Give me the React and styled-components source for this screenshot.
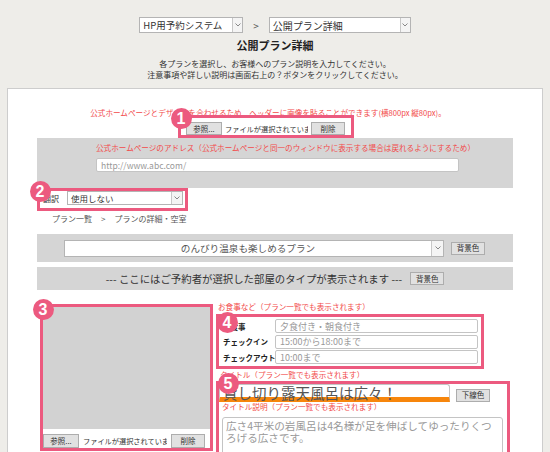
import React from 'react'
import styled, { createGlobalStyle } from 'styled-components'

const PINK = '#ec5a7f'
const RED = '#f24a4a'
const BAND = '#d5d5d5'

const GlobalStyle = createGlobalStyle`
  html, body {
    margin: 0;
    padding: 0;
    overflow: hidden;
  }
  body {
    background: #eeede9;
    font-family: "Noto Sans CJK JP", "Noto Sans", sans-serif;
    color: #333;
  }
`

const Page = styled.div`
  padding-top: 17px;
  height: 452px;
`

const Nav = styled.nav`
  display: flex;
  justify-content: center;
  align-items: center;
  gap: 10px;
  height: 16px;
  font-size: 10px;
  color: #555;
`

const SelectBox = styled.div`
  display: flex;
  width: ${(p) => p.$width}px;
  height: ${(p) => p.$height}px;
  box-sizing: border-box;
  border: 1px solid #b4b4b4;
  background: #fff;
  font-size: ${(p) => p.$size || 9.5}px;
  color: ${(p) => p.$color || '#333'};
`

const SelectText = styled.span`
  flex: 1;
  display: flex;
  align-items: center;
  justify-content: ${(p) => (p.$center ? 'center' : 'flex-start')};
  padding-left: ${(p) => (p.$center ? 0 : 3)}px;
  white-space: nowrap;
  overflow: hidden;
`

const SelectArrow = styled.span`
  width: ${(p) => p.$w || 9}px;
  display: flex;
  align-items: center;
  justify-content: center;
  border-left: 1px solid #c8c8c8;
  background: #f4f4f4;
`

const Intro = styled.header`
  text-align: center;
  margin-top: 6px;
`

const Title = styled.h1`
  margin: 0 0 6px;
  font-size: 11px;
  line-height: 13px;
  font-weight: 700;
  color: #222;
`

const Lead = styled.p`
  margin: 0;
  font-size: 8px;
  line-height: 11px;
  color: #333;
`

const Panel = styled.main`
  margin: 8px 7px 0;
  background: #fff;
  border: 1px solid #cdcdcd;
  padding: 19px 29px 20px;
`

const Note = styled.p`
  margin: ${(p) => p.$margin || '0'};
  padding: ${(p) => p.$pad || '0'};
  font-size: 7.6px;
  line-height: 10px;
  color: ${RED};
  white-space: nowrap;
  text-align: ${(p) => p.$align || 'left'};
`

const Callout = styled.div`
  position: relative;
  box-sizing: border-box;
  border: 3px solid ${PINK};
  width: ${(p) => p.$width}px;
  height: ${(p) => (p.$height ? `${p.$height}px` : 'auto')};
  margin: ${(p) => p.$margin || '0'};
  padding: ${(p) => p.$pad || '0'};
`

const Badge = styled.span`
  position: absolute;
  left: ${(p) => (p.$x === undefined ? -10.5 : p.$x)}px;
  top: ${(p) => (p.$y === undefined ? -10.5 : p.$y)}px;
  width: 21px;
  height: 21px;
  border-radius: 50%;
  background: ${PINK};
  color: #fff;
  font-family: "Liberation Sans", Arial, sans-serif;
  font-weight: 700;
  font-size: 16px;
  line-height: 21px;
  text-align: center;
  z-index: 2;
`

const FileRow = styled.div`
  display: flex;
  align-items: center;
  gap: ${(p) => p.$gap || 4}px;
  margin-top: ${(p) => p.$top || 0}px;
`

const Button = styled.button`
  width: ${(p) => p.$width}px;
  height: ${(p) => p.$height || 13}px;
  margin-left: ${(p) => p.$left || 0}px;
  padding: 0;
  border: 1px solid #adadad;
  background: #e1e1e1;
  font-family: inherit;
  font-size: 7.5px;
  color: #333;
  line-height: 1;
  flex-shrink: 0;
`

const FileName = styled.span`
  width: ${(p) => p.$width}px;
  font-size: 7.2px;
  color: #333;
  white-space: nowrap;
  overflow: hidden;
`

const Band = styled.section`
  background: ${BAND};
  height: ${(p) => p.$height}px;
  margin-top: ${(p) => p.$top || 0}px;
  display: flex;
  flex-direction: ${(p) => (p.$column ? 'column' : 'row')};
  align-items: ${(p) => (p.$column ? 'flex-start' : 'center')};
  justify-content: ${(p) => p.$justify || 'flex-start'};
  gap: ${(p) => p.$gap || 0}px;
  padding: ${(p) => p.$pad || '0'};
  box-sizing: border-box;
`

const TextInput = styled.div`
  box-sizing: border-box;
  width: ${(p) => p.$width}px;
  height: ${(p) => p.$height || 14}px;
  border: 1px solid #c4c4c4;
  border-radius: 2px;
  background: #fff;
  font-size: ${(p) => p.$size || 9}px;
  color: #999;
  padding-left: 4px;
  display: flex;
  align-items: center;
  white-space: nowrap;
`

const TranslateLabel = styled.span`
  font-size: 8px;
  color: #333;
  margin-right: 4px;
`

const Crumbs = styled.div`
  margin: 3px 0 0 15px;
  font-size: 8px;
  line-height: 10px;
  color: #555;
  display: flex;
  gap: 9px;
`

const RoomType = styled.span`
  font-size: 10.4px;
  color: #333;
  white-space: nowrap;
`

const Bottom = styled.div`
  display: flex;
  align-items: flex-start;
  margin-top: 14px;
  margin-left: 3px;
`

const Photo = styled.div`
  height: 122px;
  background: #d2d2d2;
`

const Side = styled.div`
  margin-left: 3px;
  display: flex;
  flex-direction: column;
`

const InfoRow = styled.div`
  display: flex;
  align-items: center;
  margin-bottom: 1.5px;
`

const InfoLabel = styled.span`
  width: 52px;
  font-size: 7.5px;
  font-weight: 700;
  color: #222;
  white-space: nowrap;
`

const TitleLine = styled.div`
  display: flex;
  align-items: flex-end;
`

const TitleInput = styled.div`
  box-sizing: border-box;
  width: 231px;
  height: 18px;
  border: 1px solid #c4c4c4;
  border-bottom: 5px solid #f7860c;
  border-radius: 3px 3px 0 0;
  background: #fff;
  font-size: 14.5px;
  line-height: 16px;
  color: #555;
  padding-left: 3px;
  white-space: nowrap;
`

const TextArea = styled.div`
  box-sizing: border-box;
  width: 281px;
  height: 46px;
  margin: 5px 0 0 3px;
  border: 1px solid #c4c4c4;
  border-radius: 3px;
  font-size: 10.6px;
  line-height: 12px;
  color: #999;
  padding: 2px 3px;
`

const Chevron = () => (
  <svg width="6" height="4" viewBox="0 0 6 4">
    <path d="M0.5 0.5 L3 3 L5.5 0.5" fill="none" stroke="#888" strokeWidth="1" />
  </svg>
)

const Select = ({ width, height, size, color, center, arrow, children }) => (
  <SelectBox $width={width} $height={height} $size={size} $color={color}>
    <SelectText $center={center}>{children}</SelectText>
    <SelectArrow $w={arrow}>
      <Chevron />
    </SelectArrow>
  </SelectBox>
)

// file input as the browser draws it: button, clipped file name, delete button
const FileInput = ({ nameWidth, gap, height }) => (
  <FileRow $gap={gap}>
    <Button $width={36} $height={height}>参照...</Button>
    <FileName $width={nameWidth}>ファイルが選択されていません</FileName>
    <Button $width={34} $height={height}>削除</Button>
  </FileRow>
)

const App = () => {
  return (
    <Page>
      <GlobalStyle />
      <Nav>
        <Select width={104} height={16}>HP用予約システム</Select>
        <span>&gt;</span>
        <Select width={142} height={16} size={10}>公開プラン詳細</Select>
      </Nav>

      <Intro>
        <Title>公開プラン詳細</Title>
        <Lead>各プランを選択し、お客様へのプラン説明を入力してください。</Lead>
        <Lead>注意事項や詳しい説明は画面右上の？ボタンをクリックしてください。</Lead>
      </Intro>

      <Panel>
        <Note $align="center" $pad="0 14px 0 0">
          公式ホームページとデザインを合わせるため、ヘッダーに画像を貼ることができます(横800px 縦80px)。
        </Note>
        <Callout $width={176} $height={23} $margin="-3px 0 0 141px" $pad="4px 0 0 5px">
          <Badge>1</Badge>
          <FileInput nameWidth={83} gap={3} />
        </Callout>

        <Band $height={50} $column $pad="5px 0 0 59px" $gap={5}>
          <Note>
            公式ホームページのアドレス（公式ホームページと同一のウィンドウに表示する場合は戻れるようにするため）
          </Note>
          <TextInput $width={363} $size={8.5}>http://www.abc.com/</TextInput>
        </Band>

        <Callout $width={151} $height={23} $pad="0 0 0 3px">
          <Badge $y={-10}>2</Badge>
          <FileRow $gap={0}>
            <TranslateLabel>翻訳</TranslateLabel>
            <Select width={116} height={14} size={8.5} arrow={10}>
              使用しない
            </Select>
          </FileRow>
        </Callout>

        <Crumbs>
          <span>プラン一覧</span>
          <span>&gt;</span>
          <span>プランの詳細・空室</span>
        </Crumbs>

        <Band $height={28} $top={10} $pad="0 0 0 27px" $gap={7}>
          <Select width={380} height={17} size={9.6} color="#555" center arrow={11}>
            のんびり温泉も楽しめるプラン
          </Select>
          <Button $width={34} $height={13}>背景色</Button>
        </Band>

        <Band $height={23} $top={5} $justify="center" $gap={8}>
          <RoomType>--- ここにはご予約者が選択した部屋のタイプが表示されます ---</RoomType>
          <Button $width={34} $height={13}>背景色</Button>
        </Band>

        <Bottom>
          <Callout $width={173} $height={147}>
            <Badge $y={-8.5}>3</Badge>
            <Photo />
            <FileRow $top={5}>
              <FileInput nameWidth={84} gap={4} height={14} />
            </FileRow>
          </Callout>

          <Side>
            <Note $margin="-2px 0 0 0" $pad="0 0 0 2px">お食事など（プラン一覧でも表示されます）</Note>
            <Callout $width={268} $margin="2px 0 0 0" $pad="2px 3px 0 4px">
              <Badge $x={-2.5} $y={-5.5}>4</Badge>
              <InfoRow>
                <InfoLabel>お食事</InfoLabel>
                <TextInput $width={203}>夕食付き・朝食付き</TextInput>
              </InfoRow>
              <InfoRow>
                <InfoLabel>チェックイン</InfoLabel>
                <TextInput $width={203}>15:00から18:00まで</TextInput>
              </InfoRow>
              <InfoRow>
                <InfoLabel>チェックアウト</InfoLabel>
                <TextInput $width={203}>10:00まで</TextInput>
              </InfoRow>
            </Callout>

            <Note $margin="1px 0 0 0" $pad="0 0 0 4px">タイトル（プラン一覧でも表示されます）</Note>
            <Callout $width={294} $height={80} $margin="1px 0 0 0">
              <Badge $x={-1.5} $y={-11}>5</Badge>
              <TitleLine>
                <TitleInput>貸し切り露天風呂は広々！</TitleInput>
                <Button $width={34} $height={13} $left={6}>下線色</Button>
              </TitleLine>
              <Note $pad="0 0 0 3px">タイトル説明（プラン一覧でも表示されます）</Note>
              <TextArea>広さ4平米の岩風呂は4名様が足を伸ばしてゆったりくつろげる広さです。</TextArea>
            </Callout>
          </Side>
        </Bottom>
      </Panel>
    </Page>
  )
}

export default App
